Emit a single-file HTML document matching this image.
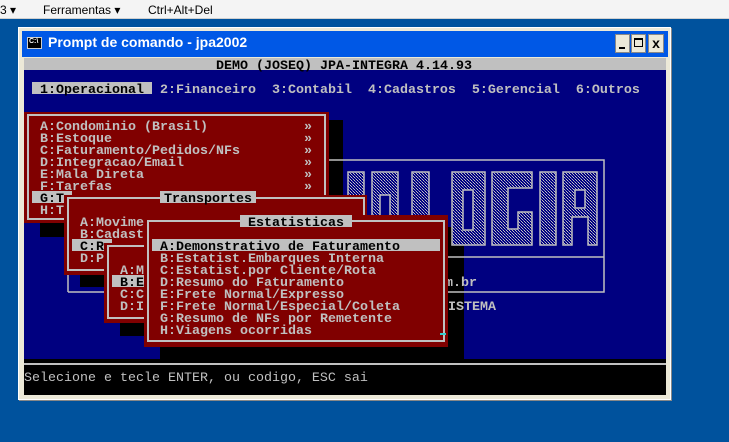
<!DOCTYPE html>
<html><head><meta charset="utf-8">
<style>
*{margin:0;padding:0;box-sizing:border-box}
body{width:729px;height:442px;background:#00529d;position:relative;overflow:hidden;font-family:"Liberation Mono",monospace}
.a{position:absolute}
.t{position:absolute;font-family:"Liberation Mono",monospace;font-weight:bold;font-size:13.33px;line-height:12px;color:#c0c0c0;white-space:pre;padding-top:3px}
.blk{position:absolute;background:#000}
.red{position:absolute;background:#800000}
.bd{position:absolute;border:2px solid #c0c0c0}
.hl{background:#c0c0c0;color:#000;height:12px}
</style></head><body>
<div class="a" style="left:0;top:0;width:729px;height:19px;background:#f4f4f4;border-bottom:1px solid #d0d0d0"></div>
<div class="a" style="left:0;top:3px;font:12px 'Liberation Sans',sans-serif;color:#000">3 ▾</div>
<div class="a" style="left:43px;top:3px;font:12px 'Liberation Sans',sans-serif;color:#000">Ferramentas ▾</div>
<div class="a" style="left:148px;top:3px;font:12px 'Liberation Sans',sans-serif;color:#000">Ctrl+Alt+Del</div>

<div class="a" style="left:18px;top:27px;width:653px;height:373px;background:#ece9d8;border:1px solid #fff;box-shadow:1px 1px 0 #888"></div>
<div class="a" style="left:22px;top:31px;width:646px;height:26px;background:#0058e6"></div>
<div class="a" style="left:27px;top:37px;width:15px;height:12px;background:#000;border:1px solid #ccc"></div>
<div class="a" style="left:29px;top:38px;font:bold 7px 'Liberation Sans';color:#fff">C:\</div>
<div class="a" style="left:48px;top:34px;font:bold 14px 'Liberation Sans',sans-serif;color:#fff">Prompt de comando - jpa2002</div>
<div class="a" style="left:615px;top:34px;width:15px;height:19px;background:#ece9d8;border:1px solid #888"></div>
<div class="a" style="left:619px;top:47px;width:6px;height:2px;background:#000"></div>
<div class="a" style="left:631px;top:34px;width:15px;height:19px;background:#ece9d8;border:1px solid #888"></div>
<div class="a" style="left:634px;top:38px;width:9px;height:9px;border:1px solid #000;border-top-width:2px"></div>
<div class="a" style="left:648px;top:34px;width:16px;height:19px;background:#ece9d8;border:1px solid #888;font:bold 14px 'Liberation Sans';text-align:center;line-height:17px">x</div>

<div class="a" style="left:24px;top:58px;width:642px;height:337px;background:#000080"></div>
<div class="a" style="left:24px;top:58px;width:642px;height:12px;background:#c0c0c0"></div>
<div class="t" style="left:216px;top:58px;color:#000">DEMO (JOSEQ) JPA-INTEGRA 4.14.93</div>
<div class="a" style="left:32px;top:82px;width:120px;height:12px;background:#c0c0c0"></div>
<div class="t" style="left:40px;top:82px;color:#000">1:Operacional</div>
<div class="t" style="left:160px;top:82px">2:Financeiro  3:Contabil  4:Cadastros  5:Gerencial  6:Outros</div>

<div class="blk" style="left:160px;top:227px;width:304px;height:132px"></div>
<div class="blk" style="left:327px;top:120px;width:16px;height:115px"></div>
<div class="blk" style="left:40px;top:223px;width:70px;height:14px"></div>
<div class="blk" style="left:80px;top:275px;width:40px;height:12px"></div>
<div class="blk" style="left:120px;top:322px;width:30px;height:14px"></div>
<div class="a" style="left:24px;top:359px;width:642px;height:36px;background:#000"></div>
<div class="a" style="left:24px;top:363px;width:642px;height:2px;background:#c0c0c0"></div>
<div class="t" style="left:24px;top:370px;font-weight:normal">Selecione e tecle ENTER, ou codigo, ESC sai</div>

<svg class="a" style="left:0;top:0" width="729" height="442">
<defs><pattern id="h" width="3" height="3" patternUnits="userSpaceOnUse"><rect width="3" height="3" fill="#000080"/><rect width="1" height="1" fill="#c0c0c0"/><rect x="2" y="2" width="1" height="1" fill="#c0c0c0"/><rect x="1" y="1" width="1" height="1" fill="#8080c0"/></pattern></defs>
<g fill="none" stroke="#c0c0c0" stroke-width="1.5">
<rect x="325" y="160" width="279" height="132"/>
<line x1="68" y1="257" x2="604" y2="257"/>
<line x1="68" y1="230" x2="68" y2="292"/><line x1="68" y1="292" x2="325" y2="292"/>
</g>
<g stroke="#c0c0c0" stroke-width="1.5" fill="url(#h)">
<rect x="348" y="172" width="16" height="73"/>
<path d="M372 172h26v73h-8v-50h-10v50h-8z"/>
<path d="M412 172h17v44h16v29h-33z"/>
<path d="M452 172h33v73h-33z"/>
<path d="M492 172h40v16h-24v41h10v-17h14v33h-40z"/>
<rect x="540" y="172" width="16" height="73"/>
<path d="M563 172h34v73h-9v-28h-16v28h-9z"/>
</g>
<g fill="#000080" stroke="#c0c0c0" stroke-width="1.5">
<rect x="463" y="190" width="10" height="40"/>
<rect x="575" y="190" width="10" height="18"/>
</g>
</svg>
<div class="t" style="left:445px;top:275px">m.br</div>
<div class="t" style="left:448px;top:299px">ISTEMA</div>

<div class="red" style="left:24px;top:112px;width:305px;height:111px"></div>
<div class="bd" style="left:27px;top:114px;width:299px;height:106px"></div>
<div class="t" style="left:40px;top:119px">A:Condominio (Brasil)</div>
<div class="t" style="left:40px;top:131px">B:Estoque</div>
<div class="t" style="left:40px;top:143px">C:Faturamento/Pedidos/NFs</div>
<div class="t" style="left:40px;top:155px">D:Integracao/Email</div>
<div class="t" style="left:40px;top:167px">E:Mala Direta</div>
<div class="t" style="left:40px;top:179px">F:Tarefas</div>
<div class="t" style="left:304px;top:119px">»<br>»<br>»<br>»<br>»<br>»</div>
<div class="t hl" style="left:32px;top:191px;width:40px;padding-left:8px">G:T</div>
<div class="t" style="left:40px;top:203px">H:T</div>

<div class="red" style="left:64px;top:195px;width:303px;height:80px"></div>
<div class="bd" style="left:67px;top:197px;width:298px;height:74px"></div>
<div class="t hl" style="left:160px;top:191px;padding-left:4px;padding-right:4px">Transportes</div>
<div class="t" style="left:80px;top:215px">A:Movime</div>
<div class="t" style="left:80px;top:227px">B:Cadast</div>
<div class="t hl" style="left:72px;top:239px;width:40px;padding-left:8px">C:R</div>
<div class="t" style="left:80px;top:251px">D:P</div>

<div class="red" style="left:104px;top:243px;width:100px;height:80px"></div>
<div class="bd" style="left:107px;top:245px;width:95px;height:74px"></div>
<div class="t" style="left:120px;top:263px">A:M</div>
<div class="t hl" style="left:112px;top:275px;width:40px;padding-left:8px">B:E</div>
<div class="t" style="left:120px;top:287px">C:C</div>
<div class="t" style="left:120px;top:299px">D:I</div>

<div class="red" style="left:144px;top:215px;width:304px;height:132px"></div>
<div class="bd" style="left:147px;top:220px;width:298px;height:122px"></div>
<div class="t hl" style="left:240px;top:215px;width:112px;text-align:center">Estatisticas</div>
<div class="t hl" style="left:152px;top:239px;width:288px;padding-left:8px">A:Demonstrativo de Faturamento</div>
<div class="t" style="left:160px;top:251px">B:Estatist.Embarques Interna
C:Estatist.por Cliente/Rota
D:Resumo do Faturamento
E:Frete Normal/Expresso
F:Frete Normal/Especial/Coleta
G:Resumo de NFs por Remetente
H:Viagens ocorridas</div>
<div class="a" style="left:440px;top:333px;width:6px;height:2px;background:#3cc"></div>
</body></html>
